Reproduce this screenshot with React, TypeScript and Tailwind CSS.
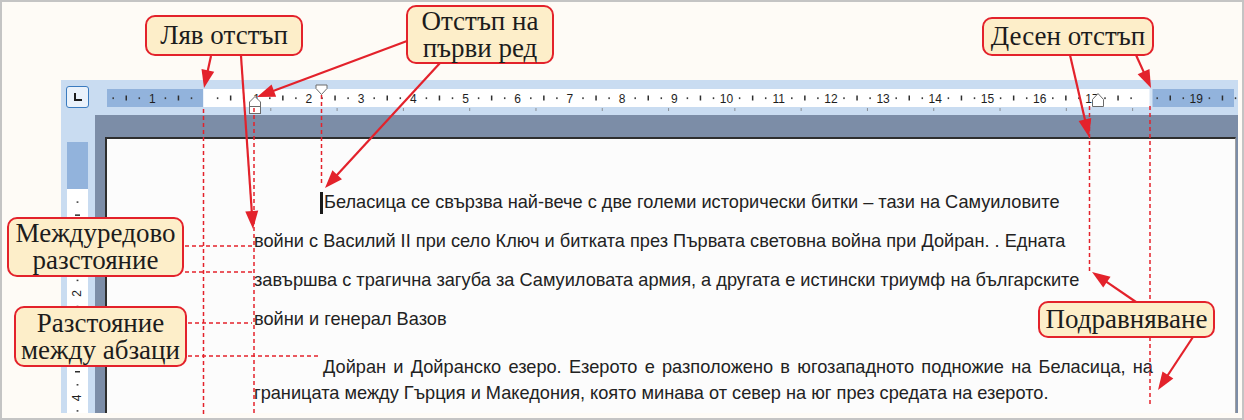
import React from 'react';

const RED = '#e3222b';
const UNIT = 52.2;
const ZERO = 204.5;

function Arrow({ x1, y1, x2, y2 }: { x1: number; y1: number; x2: number; y2: number }) {
  const dx = x2 - x1;
  const dy = y2 - y1;
  const len = Math.hypot(dx, dy);
  const ux = dx / len;
  const uy = dy / len;
  const hl = 18;
  const hw = 6.5;
  const bx = x2 - ux * hl;
  const by = y2 - uy * hl;
  const px = -uy;
  const py = ux;
  return (
    <g>
      <line x1={x1} y1={y1} x2={bx + ux * 3} y2={by + uy * 3} stroke={RED} strokeWidth={2.2} />
      <polygon
        points={`${x2},${y2} ${bx + px * hw},${by + py * hw} ${bx - px * hw},${by - py * hw}`}
        fill={RED}
      />
    </g>
  );
}

function Dash({ x1, y1, x2, y2 }: { x1: number; y1: number; x2: number; y2: number }) {
  return <line x1={x1} y1={y1} x2={x2} y2={y2} stroke={RED} strokeWidth={1.5} strokeDasharray="4 3" />;
}

// horizontal ruler, drawn in coords local to x=95, y=80
function Ruler() {
  const ox = 95;
  const oy = 80;
  const marks: React.ReactNode[] = [];
  for (let q = -7; q <= 79; q++) {
    if (q === 0) continue;
    const x = ZERO + (q * UNIT) / 4 - ox;
    const abs = x + ox;
    if (abs > 1140 && abs < 1155) continue;
    if (q % 4 === 0) {
      marks.push(
        <text
          key={q}
          x={x}
          y={102.5 - oy}
          textAnchor="middle"
          fontSize={12}
          fill="#1e1e1e"
          fontFamily='"Liberation Sans", Arial, sans-serif'
        >
          {Math.abs(q / 4)}
        </text>
      );
    } else if (Math.abs(q % 4) === 2) {
      marks.push(<rect key={q} x={x - 0.7} y={95.5 - oy} width={1.5} height={5} fill="#2e2e2e" />);
    } else {
      marks.push(<rect key={q} x={x - 0.7} y={97.3 - oy} width={1.5} height={1.8} fill="#3a3a3a" />);
    }
  }
  const tabs: React.ReactNode[] = [];
  for (let k = 1; k <= 14; k++) {
    const x = ZERO + k * UNIT * 1.27 - ox;
    tabs.push(<rect key={k} x={x - 0.5} y={108 - oy} width={1} height={3} fill="#8a8f96" />);
  }
  return (
    <svg width={1143} height={35} viewBox="0 0 1143 35" className="block shrink-0">
      <rect x={107 - ox} y={89 - oy} width={1127} height={18} fill="#d7e5f5" />
      <rect x={107 - ox} y={89 - oy} width={96} height={18} fill="#92b3dc" />
      <rect x={203.5 - ox} y={89 - oy} width={946} height={18} fill="#ffffff" />
      <rect x={1152.5 - ox} y={89 - oy} width={81.5} height={18} fill="#92b3dc" />
      {marks}
      {tabs}
      {/* first line indent */}
      <path
        d={`M${316 - ox} ${85 - oy} H${327 - ox} V${88.5 - oy} L${321.5 - ox} ${94.5 - oy} L${316 - ox} ${88.5 - oy} Z`}
        fill="#fff"
        stroke="#6b6b6b"
        strokeWidth={1}
      />
      {/* hanging indent */}
      <path
        d={`M${255 - ox} ${96.5 - oy} L${260.5 - ox} ${102 - oy} V${106.5 - oy} H${249.5 - ox} V${102 - oy} Z`}
        fill="#fff"
        stroke="#6b6b6b"
        strokeWidth={1}
      />
      <rect x={249.5 - ox} y={106.5 - oy} width={11} height={7} fill="#fff" stroke="#6b6b6b" strokeWidth={1} />
      {/* right indent */}
      <path
        d={`M${1098 - ox} ${93.5 - oy} L${1103.5 - ox} ${99.5 - oy} V${106.5 - oy} H${1092.5 - ox} V${99.5 - oy} Z`}
        fill="#fff"
        stroke="#6b6b6b"
        strokeWidth={1}
      />
    </svg>
  );
}

function VRuler() {
  const oy = 142;
  const marks: React.ReactNode[] = [];
  for (let q = 1; q <= 17; q++) {
    const y = 189 + (q * UNIT) / 4 - oy;
    if (q % 4 === 0) {
      // 1 and 3 sit under the callouts
      if (q === 4 || q === 12) continue;
      marks.push(
        <text
          key={q}
          x={10.5}
          y={y}
          textAnchor="middle"
          dominantBaseline="central"
          fontSize={12}
          fill="#1e1e1e"
          fontFamily='"Liberation Sans", Arial, sans-serif'
          transform={`rotate(-90 10.5 ${y})`}
        >
          {q / 4}
        </text>
      );
    } else if (q % 4 === 2) {
      marks.push(<rect key={q} x={8} y={y - 0.7} width={5} height={1.5} fill="#2e2e2e" />);
    } else {
      marks.push(<rect key={q} x={9.6} y={y - 0.7} width={1.8} height={1.5} fill="#3a3a3a" />);
    }
  }
  return (
    <svg width={21} height={271} viewBox="0 0 21 271" className="block">
      <rect x={0} y={0} width={21} height={47} fill="#92b3dc" />
      <rect x={0} y={47} width={21} height={224} fill="#ffffff" />
      {marks}
    </svg>
  );
}

function Callout({ className, lines }: { className: string; lines: string[] }) {
  return (
    <div
      className={`absolute flex flex-col items-center justify-center rounded-[10px] border-2 border-[#e3222b] bg-[#fdeec9] text-[27px] leading-[27px] text-[#1c1c1c] font-['Liberation_Serif','Times_New_Roman',serif] ${className}`}
    >
      {lines.map((l) => (
        <span key={l} className="whitespace-nowrap">
          {l}
        </span>
      ))}
    </div>
  );
}

export default function App() {
  return (
    <div className="relative w-[1244px] h-[420px] overflow-hidden bg-[#fefbf6] shadow-[inset_0_0_0_2px_#c4c4c4] pt-[80px] pl-[61px]">
      {/* Word window */}
      <div className="w-[1177px] h-[333px] flex flex-col bg-[#c9dcf1]">
        <div className="h-[35px] flex items-start shrink-0">
          <div className="ml-[5px] mt-[6px] w-[23px] h-[22px] rounded-[3px] border-[1.5px] border-[#3a7bbf] bg-[#eaf2fb] flex items-center justify-center">
            <svg width={12} height={10} viewBox="0 0 12 10">
              <path d="M3 1 V8 H10" stroke="#1e1e1e" strokeWidth={2} fill="none" />
            </svg>
          </div>
          <div className="ml-[6px]">
            <Ruler />
          </div>
        </div>
        <div className="flex-1 flex min-h-0">
          <div className="w-[34px] shrink-0 pt-[27px] pl-[6px] bg-[#c9dcf1]">
            <VRuler />
          </div>
          <div className="flex-1 flex bg-[#7c8da7] pl-[10px] pt-[22px] pr-[2px]">
            <div className="flex-1 bg-[#fcfcfc] border-l-2 border-t-2 border-[#2e2e2e] border-r border-r-[#a0a0a0] pl-[147px] pt-[44px] pr-[82px] font-['Liberation_Sans',Arial,sans-serif] text-[18.2px] text-[#222]">
              <div>
                <div className="h-[39px] flex items-center whitespace-nowrap pl-[66px]">
                  <span className="w-[3px] h-[22px] bg-[#1a1a1a] mr-[1px] shrink-0" />
                  Беласица се свързва най-вече с две големи исторически битки – тази на Самуиловите
                </div>
                <div className="h-[39px] leading-[39px] whitespace-nowrap">
                  войни с Василий II при село Ключ и битката през Първата световна война при Дойран. . Едната
                </div>
                <div className="h-[39px] leading-[39px] whitespace-nowrap">
                  завършва с трагична загуба за Самуиловата армия, а другата е истински триумф на българските
                </div>
                <div className="h-[39px] leading-[39px] whitespace-nowrap">войни и генерал Вазов</div>
              </div>
              <div className="mt-[15px]">
                <div className="h-[26px] leading-[26px] whitespace-nowrap pl-[69px] text-justify [text-align-last:justify]">
                  Дойран и Дойранско езеро. Езерото е разположено в югозападното подножие на Беласица, на
                </div>
                <div className="h-[26px] leading-[26px] whitespace-nowrap">
                  границата между Гърция и Македония, която минава от север на юг през средата на езерото.
                </div>
              </div>
            </div>
          </div>
        </div>
      </div>

      {/* guide lines and arrows */}
      <svg className="absolute left-0 top-0 pointer-events-none" width={1244} height={420} viewBox="0 0 1244 420">
        <Dash x1={203.5} y1={109} x2={203.5} y2={415} />
        <Dash x1={254} y1={108} x2={254} y2={415} />
        <Dash x1={321.5} y1={95} x2={321.5} y2={186} />
        <Dash x1={1089.5} y1={106} x2={1089.5} y2={271} />
        <Dash x1={1150} y1={106} x2={1150} y2={407} />
        <Dash x1={185} y1={246} x2={253} y2={246} />
        <Dash x1={185} y1={272} x2={253} y2={272} />
        <Dash x1={188} y1={323} x2={252} y2={323} />
        <Dash x1={188} y1={356} x2={320} y2={356} />

        <Arrow x1={211} y1={56} x2={204} y2={88} />
        <Arrow x1={241} y1={56} x2={253} y2={229} />
        <Arrow x1={407} y1={41} x2={257} y2={97} />
        <Arrow x1={440} y1={63} x2={325} y2={188} />
        <Arrow x1={1070} y1={55} x2={1089} y2={137} />
        <Arrow x1={1136} y1={55} x2={1151} y2={88} />
        <Arrow x1={1136} y1={302} x2={1092} y2={272} />
        <Arrow x1={1193} y1={337} x2={1158} y2={390} />
      </svg>

      {/* callouts */}
      <Callout className="left-[145px] top-[15px] w-[158px] h-[41px]" lines={['Ляв отстъп']} />
      <Callout className="left-[406px] top-[5px] w-[148px] h-[59px]" lines={['Отстъп на', 'първи ред']} />
      <Callout className="left-[982px] top-[17px] w-[172px] h-[39px]" lines={['Десен отстъп']} />
      <Callout className="left-[7px] top-[217px] w-[177px] h-[60px]" lines={['Междуредово', 'разстояние']} />
      <Callout className="left-[14px] top-[306px] w-[173px] h-[61px]" lines={['Разстояние', 'между абзаци']} />
      <Callout className="left-[1038px] top-[301px] w-[177px] h-[37px]" lines={['Подравняване']} />
    </div>
  );
}
